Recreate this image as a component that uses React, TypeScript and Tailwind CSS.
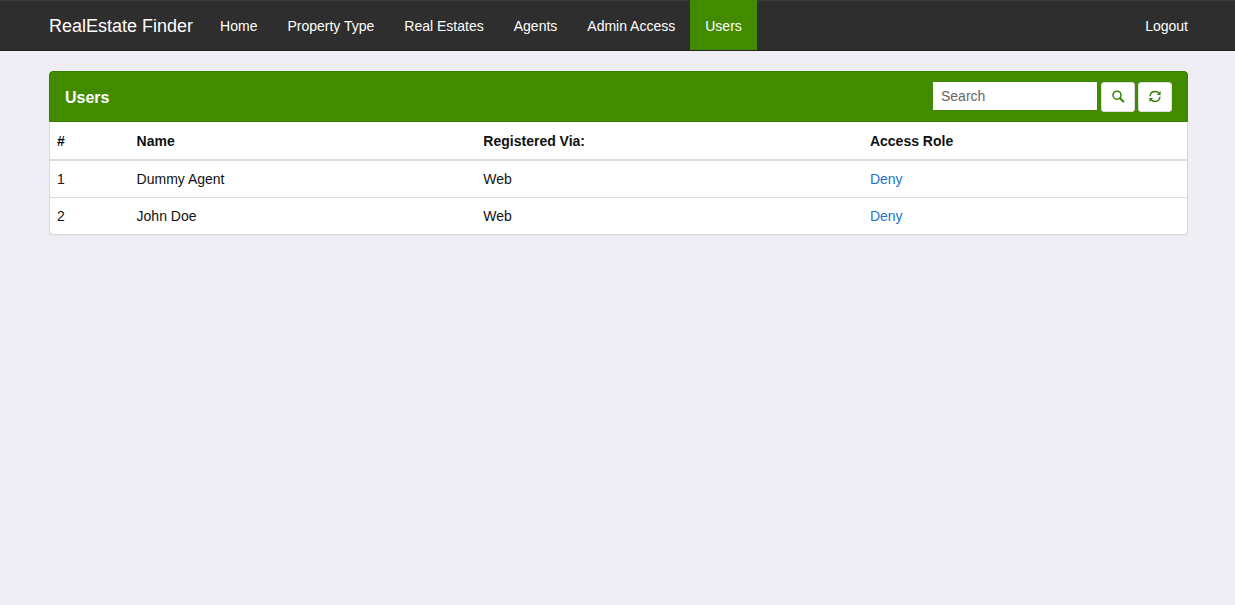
import React from "react";

type NavItem = { label: string; active?: boolean };
type User = { id: number; name: string; via: string; role: string };

const navItems: NavItem[] = [
  { label: "Home" },
  { label: "Property Type" },
  { label: "Real Estates" },
  { label: "Agents" },
  { label: "Admin Access" },
  { label: "Users", active: true },
];

const users: User[] = [
  { id: 1, name: "Dummy Agent", via: "Web", role: "Deny" },
  { id: 2, name: "John Doe", via: "Web", role: "Deny" },
];

function SearchIcon() {
  return (
    <svg viewBox="0 0 14 14" className="size-3.5" fill="none" stroke="currentColor" aria-hidden="true">
      <circle cx="6" cy="5.2" r="4" strokeWidth="1.5" />
      <path d="M9 8.2 12.4 11.6" strokeWidth="2" strokeLinecap="round" />
    </svg>
  );
}

function RefreshIcon() {
  return (
    <svg viewBox="0 0 14 14" className="size-3.5" aria-hidden="true">
      <g fill="none" stroke="currentColor" strokeWidth="1.4">
        <path d="M2 6.2C2.3 3.4 4.3 1.5 7 1.5c1.5 0 2.9.6 3.9 1.7" />
        <path d="M12 6.8C11.7 9.6 9.7 11.5 7 11.5c-1.5 0-2.9-.6-3.9-1.7" />
      </g>
      <path d="M12.6 0.9v4.2H8.9zM1.4 12.1V7.9h3.7z" fill="currentColor" />
    </svg>
  );
}

function Navbar() {
  return (
    <nav className="border-b border-[#222222] bg-[#2e2e2e] pl-[49px] pr-[47px] text-white shadow-[inset_0_1px_0_#3b3b3b]">
      <div className="flex h-[50px] items-stretch">
        <a href="#" className="mr-3 flex items-center pt-0.5 text-lg">
          RealEstate Finder
        </a>
        <ul className="flex">
          {navItems.map((item) => (
            <li key={item.label} className="flex">
              <a
                href="#"
                aria-current={item.active ? "page" : undefined}
                className={`flex items-center px-[15px] pt-0.5 ${item.active ? "bg-[#428a00]" : ""}`}
              >
                {item.label}
              </a>
            </li>
          ))}
        </ul>
        <a href="#" className="ml-auto flex items-center pt-0.5">
          Logout
        </a>
      </div>
    </nav>
  );
}

function UsersPanel() {
  return (
    <section className="rounded border border-[#d9d9dc] bg-white shadow-[0_1px_1px_rgba(0,0,0,0.05)]">
      <header className="-mx-px -mt-px flex h-[51px] items-center justify-between rounded-t border border-[#378000] bg-[#428a00] px-[15px]">
        <h1 className="pt-0.5 text-base font-bold text-white">Users</h1>
        <form className="flex items-start gap-[3px]" onSubmit={(e) => e.preventDefault()}>
          <input
            type="text"
            aria-label="Search"
            placeholder="Search"
            className="mr-px h-7 w-[164px] bg-white px-2 text-sm text-[#333333] outline-none placeholder:text-[#666666]"
          />
          <button
            type="submit"
            aria-label="Search users"
            className="flex h-[30px] w-[34px] items-center justify-center rounded-[3px] border border-[#dddddd] bg-white text-[#338000]"
          >
            <SearchIcon />
          </button>
          <button
            type="button"
            aria-label="Refresh"
            className="flex h-[30px] w-[34px] items-center justify-center rounded-[3px] border border-[#dddddd] bg-white text-[#338000]"
          >
            <RefreshIcon />
          </button>
        </form>
      </header>
      <table className="w-full table-fixed text-left">
        <thead>
          <tr className="border-b-2 border-[#dddddd]">
            <th className="w-[7%] px-[7px] pt-[9px] pb-2">#</th>
            <th className="w-[30.5%] px-[7px] pt-[9px] pb-2">Name</th>
            <th className="w-[34%] px-[7px] pt-[9px] pb-2">Registered Via:</th>
            <th className="px-[7px] pt-[9px] pb-2">Access Role</th>
          </tr>
        </thead>
        <tbody>
          {users.map((user) => (
            <tr key={user.id} className="border-b border-[#dddddd] last:border-b-0">
              <td className="px-[7px] py-2">{user.id}</td>
              <td className="px-[7px] py-2">{user.name}</td>
              <td className="px-[7px] py-2">{user.via}</td>
              <td className="px-[7px] py-2">
                <a href="#" className="text-[#1a75cf]">
                  {user.role}
                </a>
              </td>
            </tr>
          ))}
        </tbody>
      </table>
    </section>
  );
}

export default function App() {
  return (
    <div className="min-h-screen bg-[#efeef4] font-['Liberation_Sans',Arial,sans-serif] text-sm text-[#111111]">
      <Navbar />
      <main className="pl-[49px] pr-[47px] pt-5">
        <UsersPanel />
      </main>
    </div>
  );
}
